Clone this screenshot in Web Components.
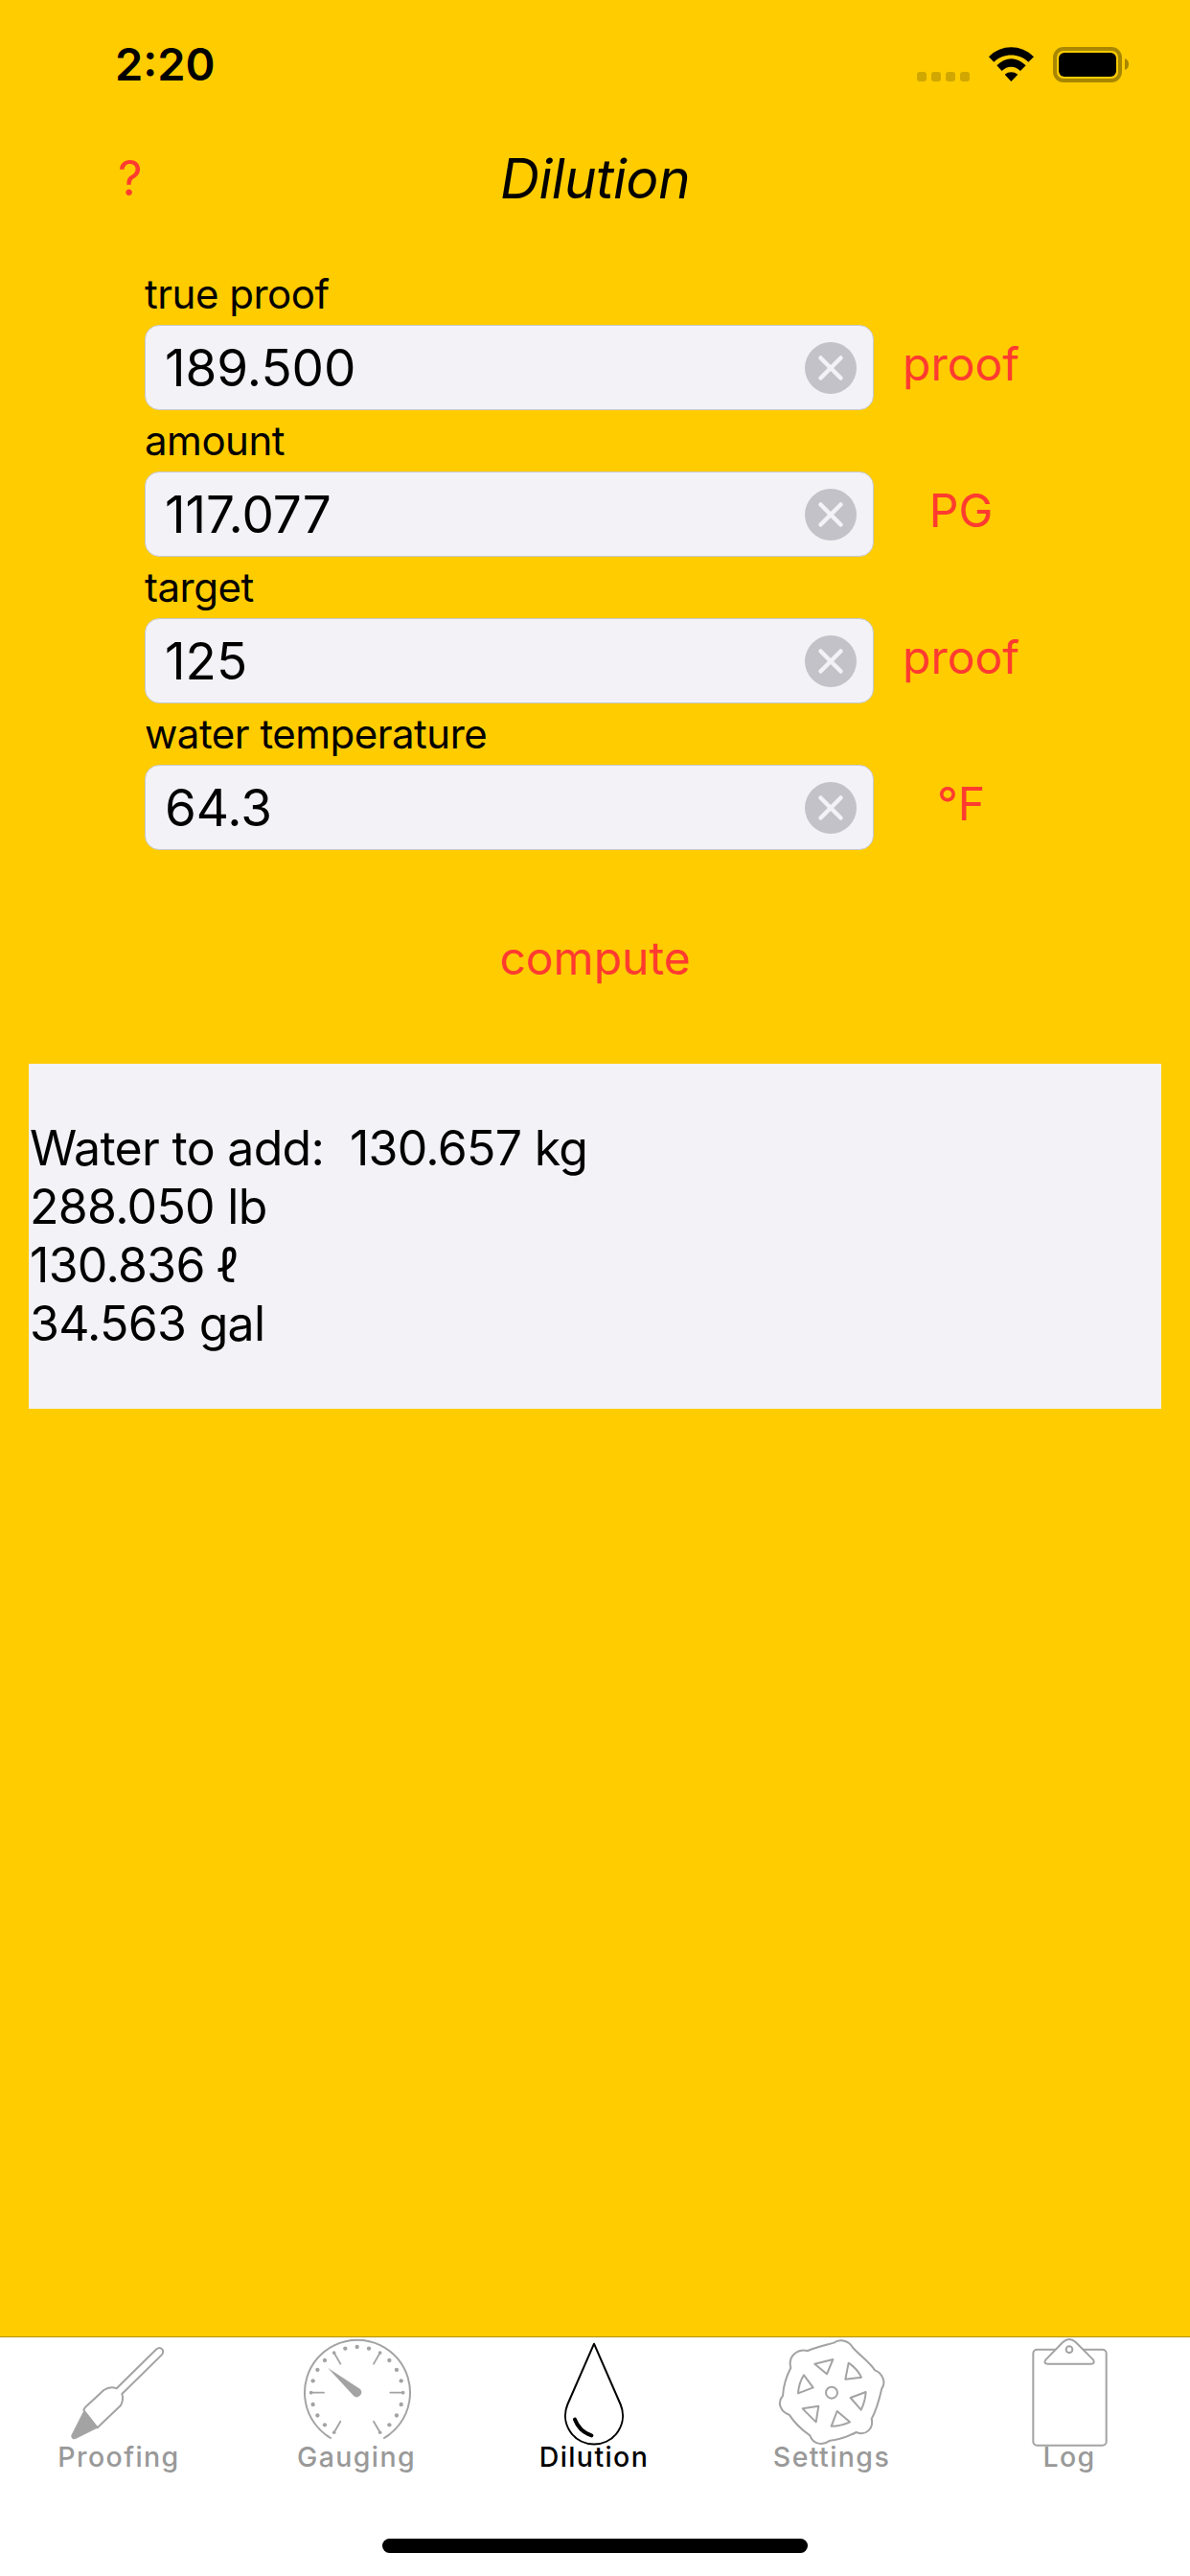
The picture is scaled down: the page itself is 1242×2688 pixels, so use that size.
<!DOCTYPE html>
<html>
<head>
<meta charset="utf-8">
<title>Dilution</title>
<style>
    html, body { margin: 0; padding: 0; background: #ffcc00; }
    body { font-family: Inter, "Liberation Sans", "DejaVu Sans", sans-serif; }
</style>
</head>
<body>
<app-screen>
    <status-bar time="2:20"></status-bar>
    <nav-header title="Dilution"></nav-header>
    <dilution-form>
        <measure-field label="true proof" value="189.500" unit="proof"></measure-field>
        <measure-field label="amount" value="117.077" unit="PG"></measure-field>
        <measure-field label="target" value="125" unit="proof"></measure-field>
        <measure-field label="water temperature" value="64.3" unit="°F"></measure-field>
    </dilution-form>
    <action-button>compute</action-button>
    <result-panel>
        <div>Water to add:&nbsp; 130.657 kg</div>
        <div>288.050 lb</div>
        <div>130.836 ℓ</div>
        <div>34.563 gal</div>
    </result-panel>
    <tab-bar slot="bottom">
        <tab-item icon="proofing" label="Proofing"></tab-item>
        <tab-item icon="gauging" label="Gauging"></tab-item>
        <tab-item icon="dilution" label="Dilution" active></tab-item>
        <tab-item icon="settings" label="Settings"></tab-item>
        <tab-item icon="log" label="Log"></tab-item>
    </tab-bar>
</app-screen>

<script>
class AppScreen extends HTMLElement {
    constructor() {
        super();
        this.attachShadow({ mode: 'open' }).innerHTML = `
<style>
    :host { display: flex; flex-direction: column; width: 1242px; height: 2688px; background: #ffcc00; overflow: hidden; }
    main { flex: 1; display: flex; flex-direction: column; }
</style>
<main><slot></slot></main>
<slot name="bottom"></slot>`;
    }
}

class StatusBar extends HTMLElement {
    connectedCallback() {
        this.attachShadow({ mode: 'open' }).innerHTML = `
<style>
    :host { display: flex; align-items: center; height: 132px; padding: 0 64px 0 120px; box-sizing: border-box; }
    .time { font: 600 47px/1 Inter, sans-serif; color: #000; flex: 1; }
    svg { display: block; overflow: visible; }
</style>
<span class="time">${this.getAttribute('time')}</span>
<svg width="222" height="42" viewBox="956 45 222 42">
    <g fill="#d0a700">
        <rect x="957" y="75" width="10" height="10" rx="3"/>
        <rect x="972" y="75" width="10" height="10" rx="3"/>
        <rect x="987" y="75" width="10" height="10" rx="3"/>
        <rect x="1002" y="75" width="10" height="10" rx="3"/>
    </g>
    <g transform="translate(900 30) scale(.33333)" fill="#000">
        <path d="M396 88C435 48 497 48 537 88L520 104C490 75 442 75 412 104Z"/>
        <path d="M421 115C450 87 482 87 512 115L495 132C478 115 454 115 437 132Z"/>
        <path d="M446 143C458 133 474 133 487 143L466 165Z"/>
    </g>
    <rect x="1101" y="51" width="68" height="33" rx="9" fill="none" stroke="#a88700" stroke-width="4"/>
    <rect x="1105" y="55" width="60" height="25" rx="6" fill="#000"/>
    <path d="M1174 61C1177 62 1178 64.500 1178 67C1178 69.500 1177 72 1174 73Z" fill="#a88700"/>
</svg>`;
    }
}

class NavHeader extends HTMLElement {
    connectedCallback() {
        this.attachShadow({ mode: 'open' }).innerHTML = `
<style>
    :host { display: block; height: 108px; }
    .bar { height: 100%; display: grid; grid-template-columns: 1fr auto 1fr; align-items: center; }
    .help { font: 400 50px/1 Inter, sans-serif; color: #ff3b30; margin-left: 123px; }
    h1 { margin: 0; font: italic 400 57px/1 Inter, sans-serif; color: #000; letter-spacing: -.6px; }
</style>
<div class="bar">
    <span class="help">?</span>
    <h1>${this.getAttribute('title')}</h1>
    <span></span>
</div>`;
    }
}

class DilutionForm extends HTMLElement {
    constructor() {
        super();
        this.attachShadow({ mode: 'open' }).innerHTML = `
<style>
    :host { display: block; padding: 35px 0 0 151px; }
</style>
<slot></slot>`;
    }
}

class MeasureField extends HTMLElement {
    connectedCallback() {
        this.attachShadow({ mode: 'open' }).innerHTML = `
<style>
    :host { display: block; }
    .label { height: 64px; line-height: 64px; font-size: 42px; letter-spacing: -.5px; color: #000; font-family: Inter, sans-serif; }
    .row { display: flex; align-items: center; }
    .box {
        width: 761px; height: 89px; box-sizing: border-box; display: flex; align-items: center; justify-content: space-between;
        padding: 0 17px 0 20px; background: #f2f2f7; border: 1px solid #c8c8cc; border-radius: 15px;
    }
    .value { font: 400 53px/1 Inter, sans-serif; color: #000; padding-top: 2px; }
    .unit { width: 182px; text-align: center; font: 400 48px/1 Inter, sans-serif; color: #ff3b30; padding-bottom: 8px; }
    svg { display: block; }
</style>
<div class="label">${this.getAttribute('label')}</div>
<div class="row">
    <div class="box">
        <span class="value">${this.getAttribute('value')}</span>
        <svg width="54" height="54" viewBox="0 0 54 54">
            <circle cx="27" cy="27" r="27" fill="#c2c2c8"/>
            <path d="M16.500 16.500L37.500 37.500M37.500 16.500L16.500 37.500" stroke="#f2f2f7" stroke-width="4.500" stroke-linecap="round"/>
        </svg>
    </div>
    <span class="unit">${this.getAttribute('unit')}</span>
</div>`;
    }
}

class ActionButton extends HTMLElement {
    constructor() {
        super();
        this.attachShadow({ mode: 'open' }).innerHTML = `
<style>
    :host { display: block; height: 100px; margin-top: 63px; text-align: center; font: 400 48px/100px Inter, sans-serif; color: #ff3b30; }
</style>
<slot></slot>`;
    }
}

class ResultPanel extends HTMLElement {
    constructor() {
        super();
        this.attachShadow({ mode: 'open' }).innerHTML = `
<style>
    :host {
        display: flex; flex-direction: column; justify-content: center; height: 360px; margin: 60px 30px 0; padding-left: 1px;
        box-sizing: border-box; background: #f2f2f7; color: #000; font: 400 50px/61px Inter, "DejaVu Sans", sans-serif; letter-spacing: -.7px;
    }
</style>
<slot></slot>`;
    }
}

// gauge face: a dot every 15 degrees, long tick every 60 starting at 30
function gaugeMarks() {
    let marks = '';
    for (let a = -150; a <= 150; a += 15) {
        let r = a * Math.PI / 180;
        let s = Math.sin(r), c = Math.cos(r);
        let cx = 1118, cy = 228;
        if ((a + 150) % 60 === 0) {
            marks += `<path d="M${cx + 145 * s} ${cy - 145 * c}L${cx + 104 * s} ${cy - 104 * c}" stroke-width="5.500"/><circle cx="${cx + 144 * s}" cy="${cy - 144 * c}" r="5.500" fill="#a3a3a3" stroke="none"/>`;
        } else {
            marks += `<circle cx="${cx + 143 * s}" cy="${cy - 143 * c}" r="6.500" fill="#a3a3a3" stroke="none"/>`;
        }
    }
    return marks;
}

const ICONS = {
    proofing: { x: 192, content: `
        <path d="M365 215L490 92Q500 84 508 92Q514 102 506 110L382 232Q388 250 378 268L305 338L262 283L266 275L325 220Q345 207 365 215Z" fill="none" stroke="#a3a3a3" stroke-width="6" stroke-linejoin="round"/>
        <path d="M262 287L305 338L236 372Q224 376 224 362Z" fill="#a3a3a3" stroke="#a3a3a3" stroke-width="2" stroke-linejoin="round"/>` },
    gauging: { x: 936, content: `
        <path d="M1035 370A165 165 0 1 1 1203 370" fill="none" stroke="#a3a3a3" stroke-width="6" stroke-linecap="round"/>
        <g stroke="#a3a3a3" fill="none" stroke-linecap="round">${gaugeMarks()}</g>
        <path d="M1026 150L1128 217A15 15 0 0 1 1108 239Z" fill="#a3a3a3"/>` },
    dilution: { x: 420, content: `
        <path d="M600 75L683 265A90 90 0 1 1 517 265Z" fill="none" stroke="#000" stroke-width="6" stroke-linejoin="round"/>
        <path d="M540 312Q555 350 592 362" fill="none" stroke="#000" stroke-width="12" stroke-linecap="round"/>` },
    settings: { x: 83, content: `
        <g fill="none" stroke="#a3a3a3" stroke-width="6" stroke-linejoin="round">
            <path d="M188 97C215 85 250 78 270 72C285 60 315 62 330 88C350 110 385 135 398 158C420 165 435 195 420 215C412 250 405 280 388 310C395 340 370 365 340 352C315 365 290 375 258 378C235 395 205 390 195 362C170 345 145 320 130 297C105 290 90 260 110 238C112 205 122 175 135 150C125 115 155 90 188 97Z"/>
            <path d="M210 138L267 124L248 170Z"/>
            <path d="M316 135Q342 152 356 180L306 186Z"/>
            <path d="M370 226Q368 256 355 282L322 244Z"/>
            <path d="M172 278L222 270L214 320Z"/>
            <path d="M280 286L320 320Q292 333 262 333Z"/>
            <path d="M176 173L205 212L158 230Q160 198 176 173Z"/>
            <circle cx="263" cy="228" r="18"/>
        </g>` },
    log: { x: 830, content: `
        <g fill="none" stroke="#a3a3a3" stroke-width="6">
            <rect x="897" y="93" width="229" height="300" rx="12"/>
            <path d="M990 70Q1010 52 1030 70L1085 125Q1092 138 1078 138L943 138Q928 138 936 125Z" fill="#fff" stroke-linejoin="round"/>
            <circle cx="1010" cy="93" r="10"/>
        </g>` }
};

class TabBar extends HTMLElement {
    constructor() {
        super();
        this.attachShadow({ mode: 'open' }).innerHTML = `
<style>
    :host { display: block; height: 250px; box-sizing: border-box; background: #fff; border-top: 1px solid #b39000; }
    .tabs { display: grid; grid-template-columns: repeat(5, 1fr); padding-right: 2px; }
    .home { width: 444px; height: 15px; margin: 73px auto 0; border-radius: 8px; background: #000; }
</style>
<div class="tabs"><slot></slot></div>
<div class="home"></div>`;
    }
}

class TabItem extends HTMLElement {
    connectedCallback() {
        let icon = ICONS[this.getAttribute('icon')];
        this.attachShadow({ mode: 'open' }).innerHTML = `
<style>
    :host { display: flex; flex-direction: column; align-items: center; font: 450 28.500px/24px Inter, sans-serif; letter-spacing: 1.4px; color: #999; }
    :host([active]) { color: #000; }
    svg { display: block; overflow: visible; }
</style>
<svg width="120" height="113" viewBox="${icon.x} 55 360 339">${icon.content}</svg>
<span>${this.getAttribute('label')}</span>`;
    }
}

customElements.define('app-screen', AppScreen);
customElements.define('status-bar', StatusBar);
customElements.define('nav-header', NavHeader);
customElements.define('dilution-form', DilutionForm);
customElements.define('measure-field', MeasureField);
customElements.define('action-button', ActionButton);
customElements.define('result-panel', ResultPanel);
customElements.define('tab-bar', TabBar);
customElements.define('tab-item', TabItem);
</script>
</body>
</html>
